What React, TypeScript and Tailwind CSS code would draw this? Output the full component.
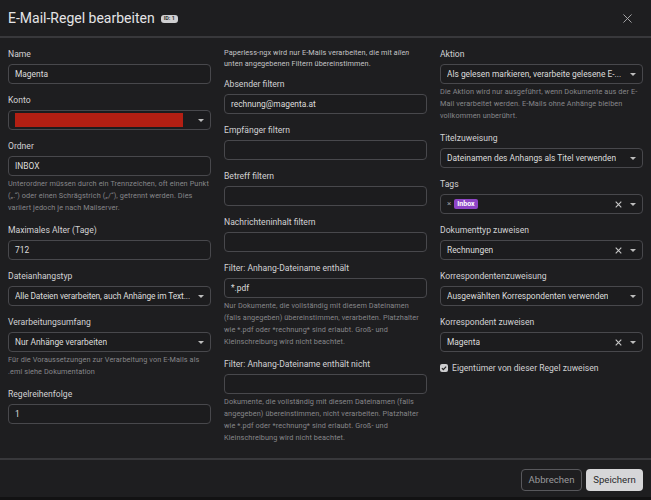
import React from "react";

const Caret = () => (
  <span className="ml-auto w-0 h-0 border-l-[3px] border-r-[3px] border-t-[3.5px] border-l-transparent border-r-transparent border-t-[#bdbdbd]" />
);

const Clear = () => (
  <svg width="7" height="7" viewBox="0 0 10 10" className="mr-[8px]" fill="none" stroke="#c8c8c8" strokeWidth="1.6">
    <path d="M1 1l8 8M9 1l-8 8" />
  </svg>
);

const Label = ({ children }: { children: React.ReactNode }) => (
  <div className="text-[8.6px] leading-[12px] text-[#d2d2d4] mb-[4px] whitespace-nowrap">{children}</div>
);

const Help = ({ children }: { children: React.ReactNode }) => (
  <p className="mt-[2px] text-[7.3px] leading-[12px] text-[#86868a] tracking-[0.1px]">{children}</p>
);

const Input = ({ value }: { value?: string }) => (
  <div className="h-[20px] rounded-[4px] border border-[#48484c] bg-[#1c1c1e] px-[6px] flex items-center text-[8.4px] text-[#dcdcdc]">
    {value}
  </div>
);

const Select = ({ children, clear }: { children?: React.ReactNode; clear?: boolean }) => (
  <div className="h-[20px] rounded-[4px] border border-[#48484c] bg-[#1c1c1e] pl-[6px] pr-[6px] flex items-center text-[8.4px] text-[#dcdcdc]">
    <div className="min-w-0 whitespace-nowrap overflow-hidden flex items-center">{children}</div>
    <div className="ml-auto flex items-center pl-[3px]">
      {clear && <Clear />}
      <Caret />
    </div>
  </div>
);

const Field = ({ label, children, help }: { label: string; children: React.ReactNode; help?: React.ReactNode }) => (
  <div className="mb-[10px]">
    <Label>{label}</Label>
    {children}
    {help && <Help>{help}</Help>}
  </div>
);

export default function App() {
  return (
    <div
      className="w-[651px] h-[500px] bg-[#1e1e20] flex flex-col border-b-[3px] border-[#121213]"
      style={{ fontFamily: "Roboto, 'Noto Sans', sans-serif" }}
    >
      {/* Header */}
      <div className="h-[38px] shrink-0 flex items-center px-2 border-b-2 border-[#38383b]">
        <h1 className="text-[14px] text-[#e4e4e6]">E-Mail-Regel bearbeiten</h1>
        <span className="ml-[6px] mt-[1px] rounded-[3px] bg-[#cfcfd1] px-[3px] h-[8px] flex items-center text-[5.5px] font-bold text-[#333]">ID: 1</span>
        <svg width="9" height="9" viewBox="0 0 10 10" className="ml-auto mr-[11px]" fill="none" stroke="#b0b0b2" strokeWidth="1">
          <path d="M0.5 0.5l9 9M9.5 0.5l-9 9" />
        </svg>
      </div>

      {/* Body */}
      <div className="flex-1 grid grid-cols-3 gap-x-[13px] px-2 pt-[10px]">
        <div>
          <Field label="Name"><Input value="Magenta" /></Field>
          <Field label="Konto">
            <Select>
              <span className="block w-[170px] h-[14px] bg-[#b31f13] -ml-[2px]" />
            </Select>
          </Field>
          <Field
            label="Ordner"
            help={<>Unterordner müssen durch ein Trennzeichen, oft einen Punkt („.“) oder einen Schrägstrich („/“), getrennt werden. Dies variiert jedoch je nach Mailserver.</>}
          >
            <Input value="INBOX" />
          </Field>
          <Field label="Maximales Alter (Tage)"><Input value="712" /></Field>
          <Field label="Dateianhangstyp">
            <Select><span className="tracking-[-0.12px]">Alle Dateien verarbeiten, auch Anhänge im Text...</span></Select>
          </Field>
          <Field
            label="Verarbeitungsumfang"
            help={<>Für die Voraussetzungen zur Verarbeitung von E-Mails als .eml siehe Dokumentation</>}
          >
            <Select>Nur Anhänge verarbeiten</Select>
          </Field>
          <Field label="Regelreihenfolge"><Input value="1" /></Field>
        </div>

        <div>
          <p className="text-[7.3px] leading-[11px] text-[#c4c4c6] tracking-[0.1px] mt-[-1px] mb-[9px]">
            Paperless-ngx wird nur E-Mails verarbeiten, die mit <em>allen</em> unten angegebenen Filtern übereinstimmen.
          </p>
          <Field label="Absender filtern"><Input value="rechnung@magenta.at" /></Field>
          <Field label="Empfänger filtern"><Input /></Field>
          <Field label="Betreff filtern"><Input /></Field>
          <Field label="Nachrichteninhalt filtern"><Input /></Field>
          <Field
            label="Filter: Anhang-Dateiname enthält"
            help={<>Nur Dokumente, die vollständig mit diesem Dateinamen (falls angegeben) übereinstimmen, verarbeiten. Platzhalter wie *.pdf oder *rechnung* sind erlaubt. Groß- und Kleinschreibung wird nicht beachtet.</>}
          >
            <Input value="*.pdf" />
          </Field>
          <Field
            label="Filter: Anhang-Dateiname enthält nicht"
            help={<>Dokumente, die vollständig mit diesem Dateinamen (falls angegeben) übereinstimmen, nicht verarbeiten. Platzhalter wie *.pdf oder *rechnung* sind erlaubt. Groß- und Kleinschreibung wird nicht beachtet.</>}
          >
            <Input />
          </Field>
        </div>

        <div>
          <Field
            label="Aktion"
            help={<>Die Aktion wird nur ausgeführt, wenn Dokumente aus der E-Mail verarbeitet werden. E-Mails ohne Anhänge bleiben vollkommen unberührt.</>}
          >
            <Select>Als gelesen markieren, verarbeite gelesene E-...</Select>
          </Field>
          <Field label="Titelzuweisung">
            <Select>Dateinamen des Anhangs als Titel verwenden</Select>
          </Field>
          <Field label="Tags">
            <Select clear>
              <span className="text-[8px] text-[#9a9a9c] mr-[3px]">×</span>
              <span className="h-[10px] px-[3px] rounded-[2px] bg-[#8e44c6] text-white text-[7px] font-bold flex items-center">Inbox</span>
            </Select>
          </Field>
          <Field label="Dokumenttyp zuweisen">
            <Select clear>Rechnungen</Select>
          </Field>
          <Field label="Korrespondentenzuweisung">
            <Select>Ausgewählten Korrespondenten verwenden</Select>
          </Field>
          <Field label="Korrespondent zuweisen">
            <Select clear>Magenta</Select>
          </Field>
          <div className="flex items-center h-[12px]">
            <span className="w-[8px] h-[8px] rounded-[2px] bg-[#cdcdcf] flex items-center justify-center mr-[4px]">
              <svg width="6" height="6" viewBox="0 0 10 10" fill="none" stroke="#222" strokeWidth="2">
                <path d="M1.5 5.2l2.4 2.4L8.6 2.6" />
              </svg>
            </span>
            <span className="text-[8.6px] text-[#d2d2d4]">Eigentümer von dieser Regel zuweisen</span>
          </div>
        </div>
      </div>

      {/* Footer */}
      <div className="h-[39px] shrink-0 border-t-2 border-[#38383b] flex items-start justify-end gap-[4px] px-2 pt-[9px]">
        <button className="w-[61px] h-[22px] rounded-[4px] border border-[#58585c] text-[9.6px] text-[#9a9a9c]">Abbrechen</button>
        <button className="w-[57px] h-[22px] rounded-[4px] bg-[#d6d6d8] text-[9.6px] text-[#2a2a2c]">Speichern</button>
      </div>
    </div>
  );
}
